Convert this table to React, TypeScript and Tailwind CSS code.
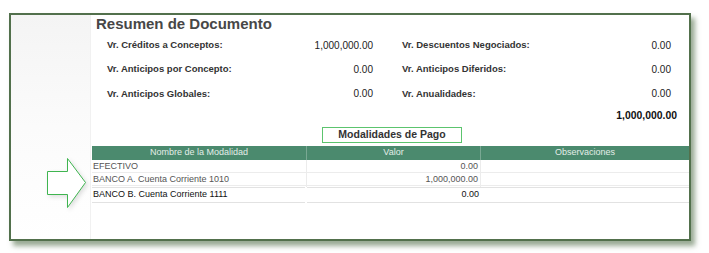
import React from 'react';

const resumen = [
  ['Vr. Créditos a Conceptos:', '1,000,000.00', 'Vr. Descuentos Negociados:', '0.00'],
  ['Vr. Anticipos por Concepto:', '0.00', 'Vr. Anticipos Diferidos:', '0.00'],
  ['Vr. Anticipos Globales:', '0.00', 'Vr. Anualidades:', '0.00'],
];

const modalidades = [
  { nombre: 'EFECTIVO', valor: '0.00' },
  { nombre: 'BANCO A. Cuenta Corriente 1010', valor: '1,000,000.00' },
];

function Arrow() {
  return (
    <svg width="42" height="52" viewBox="0 0 42 52" className="drop-shadow-[2px_2px_2px_rgba(0,0,0,0.12)]">
      <polygon
        points="0.5,13.5 20.5,13.5 20.5,0.5 38.5,24.5 20.5,49.5 20.5,36.5 0.5,36.5"
        fill="#ffffff"
        stroke="#3fb550"
        strokeWidth="1"
      />
    </svg>
  );
}

export default function App() {
  return (
    <div className="w-[709px] h-[253px] bg-white pt-[13px] pl-[9px] font-['Liberation_Sans',Arial,sans-serif]">
      <div className="w-[682px] h-[228px] border-2 border-[#52704c] bg-white flex shadow-[4px_5px_5px_rgba(70,100,60,0.55)]">
        {/* left panel with arrow */}
        <div className="w-[80px] shrink-0 bg-gradient-to-b from-[#f4f4f4] via-[#fbfbfb] to-white border-r border-[#f1f1f1] pt-[143px] pl-[36px]">
          <Arrow />
        </div>

        {/* content */}
        <div className="flex-1 flex flex-col">
          <div className="h-[18px] pl-[5px] text-[15px] leading-[18px] font-bold text-[#474747]">Resumen de Documento</div>

          <div className="pl-[16px] pr-[18px] grid grid-cols-[266px_1fr] gap-x-[29px]">
            {resumen.map((r) => (
              <React.Fragment key={r[0]}>
                <div className="h-[24.4px] flex items-center justify-between">
                  <span className="text-[9.5px] font-bold text-[#333]">{r[0]}</span>
                  <span className="text-[10px] text-[#222]">{r[1]}</span>
                </div>
                <div className="h-[24.4px] flex items-center justify-between">
                  <span className="text-[9.5px] font-bold text-[#333]">{r[2]}</span>
                  <span className="text-[10px] text-[#222]">{r[3]}</span>
                </div>
              </React.Fragment>
            ))}
          </div>

          <div className="h-[20px] flex items-center justify-end pr-[12px] text-[10.4px] font-bold text-[#111]">1,000,000.00</div>

          <div className="ml-[231px] mt-[1px] w-[140px] h-[16px] border border-[#5cc46e] flex items-center justify-center text-[10.5px] font-bold text-[#333]">
            Modalidades de Pago
          </div>

          <div className="ml-[1px] mt-[3px] w-[597px] text-[9px]">
            <div className="grid grid-cols-[215px_174px_1fr] h-[14px] bg-[#4b8a6e] text-[#e4eee8]">
              <div className="flex items-center justify-center border-r border-[#79a893]">Nombre de la Modalidad</div>
              <div className="flex items-center justify-center border-r border-[#79a893]">Valor</div>
              <div className="flex items-center justify-center">Observaciones</div>
            </div>
            {modalidades.map((m) => (
              <div key={m.nombre} className="grid grid-cols-[215px_174px_1fr] h-[13px] border-b border-[#ececec] text-[#555]">
                <div className="flex items-center pl-[1px] border-r border-[#ececec]">{m.nombre}</div>
                <div className="flex items-center justify-end pr-[2px] border-r border-[#ececec]">{m.valor}</div>
                <div />
              </div>
            ))}
            <div className="grid grid-cols-[215px_174px_1fr] h-[14px] mt-[1px] text-[#111]">
              <div className="flex items-center pl-[1px] border-y border-[#e2e2e2] mr-[2px]">BANCO B. Cuenta Corriente 1111</div>
              <div className="flex items-center justify-end pr-[2px] border-y border-[#e2e2e2]">0.00</div>
              <div className="border-y border-[#e2e2e2]" />
            </div>
          </div>
        </div>
      </div>
    </div>
  );
}
